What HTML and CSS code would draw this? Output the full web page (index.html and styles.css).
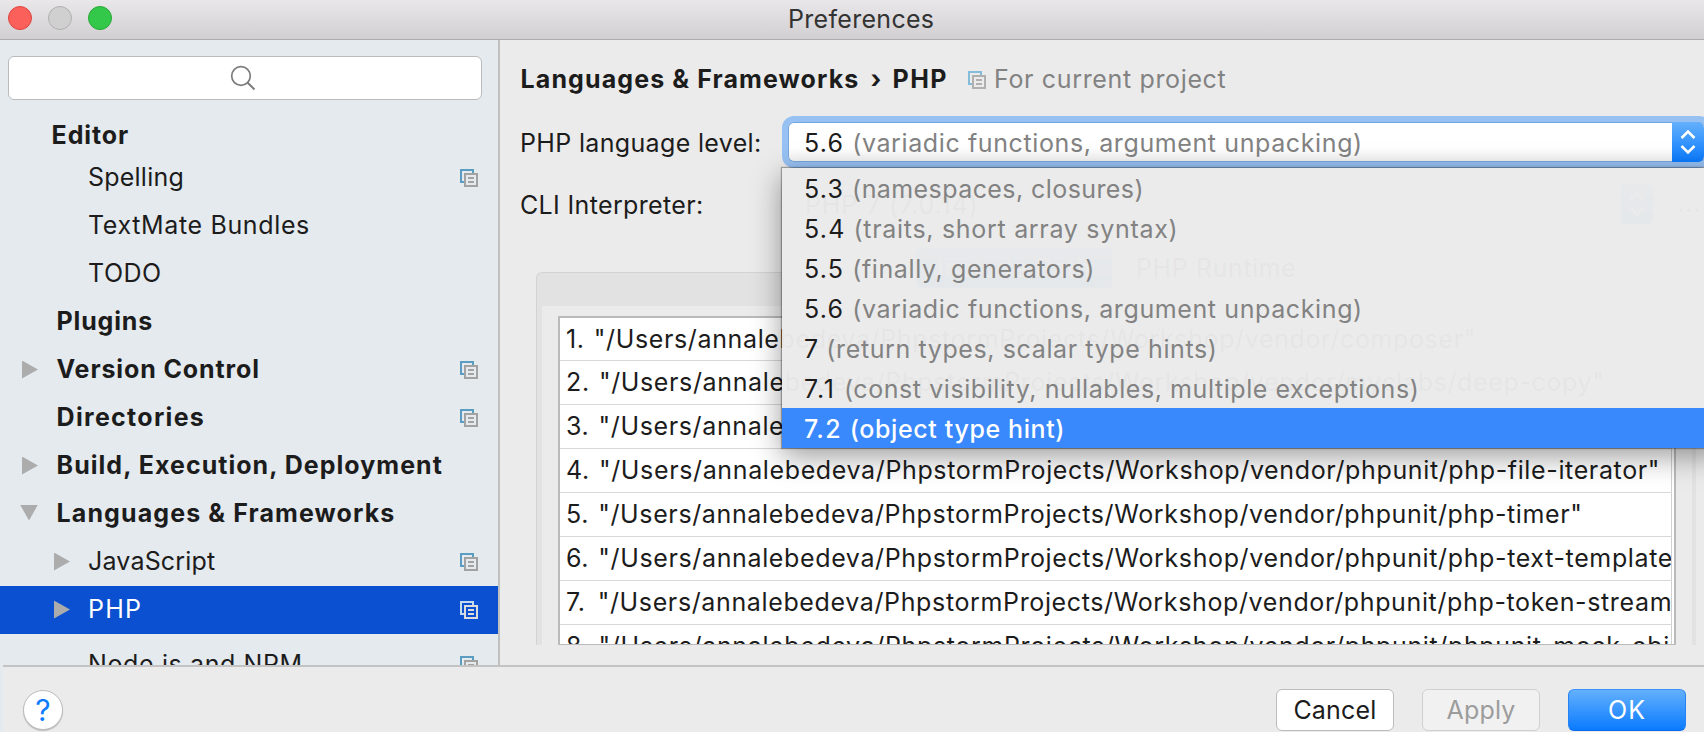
FILE: index.html
```html
<!DOCTYPE html>
<html lang="en">
<head>
<meta charset="utf-8">
<title>Preferences</title>
<link rel="stylesheet" href="styles.css">
</head>
<body>
<svg width="0" height="0" class="defs">
  <symbol id="copy" viewBox="0 0 18 18">
    <path class="back" d="M1 13V1H13V5" fill="none" stroke-width="2"/>
    <path class="back" d="M0 13H4" fill="none" stroke-width="2"/>
    <path class="front" d="M5 5H17V17H5ZM8 9H14M8 13H14" fill="none" stroke-width="2"/>
  </symbol>
  <symbol id="updown" viewBox="0 0 16 26">
    <path d="M1.5 9L8 2.5L14.5 9M1.5 17L8 23.5L14.5 17" fill="none" stroke="#fff" stroke-width="2.6"/>
  </symbol>
</svg>
<div class="window">
  <header class="titlebar">
    <span class="light close"></span><span class="light min"></span><span class="light max"></span>
    <span class="title">Preferences</span>
  </header>
  <div class="body">
    <aside class="sidebar">
      <div class="search">
        <svg width="26" height="26" viewBox="0 0 26 26"><circle cx="11" cy="11" r="9.3" fill="none" stroke="#7c7c7c" stroke-width="1.7"/><path d="M17.5 17.5L24.5 24.5" stroke="#7c7c7c" stroke-width="2"/></svg>
      </div>
      <ul class="tree">
        <li class="group editor"><span class="arrow"></span><span class="w-editor">Editor</span></li>
        <li class="sub"><span class="arrow"></span><span class="w-spelling">Spelling</span><svg class="copy"><use href="#copy"/></svg></li>
        <li class="sub"><span class="arrow"></span><span class="w-textmate">TextMate Bundles</span></li>
        <li class="sub"><span class="arrow"></span><span class="w-todo">TODO</span></li>
        <li class="group"><span class="arrow"></span><span class="w-plugins">Plugins</span></li>
        <li class="group"><span class="arrow right"></span><span class="w-vcs">Version Control</span><svg class="copy"><use href="#copy"/></svg></li>
        <li class="group"><span class="arrow"></span><span class="w-dirs">Directories</span><svg class="copy"><use href="#copy"/></svg></li>
        <li class="group"><span class="arrow right"></span><span class="w-build">Build, Execution, Deployment</span></li>
        <li class="group"><span class="arrow down"></span><span class="w-lang">Languages &amp; Frameworks</span></li>
        <li class="sub"><span class="arrow right"></span><span class="w-js">JavaScript</span><svg class="copy"><use href="#copy"/></svg></li>
        <li class="sub selected"><span class="arrow right"></span><span class="w-php">PHP</span><svg class="copy"><use href="#copy"/></svg></li>
        <li class="sub last"><span class="arrow"></span><span class="w-node">Node.js and NPM</span><svg class="copy"><use href="#copy"/></svg></li>
      </ul>
    </aside>
    <main class="content">
      <div class="crumbs">
        <span class="w-lang">Languages &amp; Frameworks</span><span class="sep">›</span><span class="w-phpb">PHP</span>
        <svg class="copy"><use href="#copy"/></svg><span class="scope">For current project</span>
      </div>
      <div class="field first">
        <label class="w-level">PHP language level:</label>
        <div class="combo focused">
          <span class="ver">5.6</span><span class="desc">(variadic functions, argument unpacking)</span>
          <span class="stepper"><svg width="16" height="26"><use href="#updown"/></svg></span>
          <ul class="menu">
            <li><span class="ver">5.3</span><span class="desc d53">(namespaces, closures)</span></li>
            <li><span class="ver">5.4</span><span class="desc d54">(traits, short array syntax)</span></li>
            <li><span class="ver">5.5</span><span class="desc">(finally, generators)</span></li>
            <li><span class="ver">5.6</span><span class="desc">(variadic functions, argument unpacking)</span></li>
            <li><span class="ver v7">7</span><span class="desc">(return types, scalar type hints)</span></li>
            <li><span class="ver v71">7.1</span><span class="desc d71">(const visibility, nullables, multiple exceptions)</span></li>
            <li class="active"><span class="ver">7.2</span><span class="desc">(object type hint)</span></li>
          </ul>
        </div>
      </div>
      <div class="field second">
        <label class="w-cli">CLI Interpreter:</label>
        <div class="combo plain"><span>PHP 7 (7.0.14)</span><span class="stepper"><svg width="16" height="26"><use href="#updown"/></svg></span></div>
        <div class="more">...</div>
      </div>
      <div class="tabs"><span class="tab on">Include Path</span><span class="tab">PHP Runtime</span></div>
      <section class="panel">
        <div class="inner">
          <ol class="paths">
            <li><span class="num">1.</span> "/Users/annalebedeva/PhpstormProjects/Workshop/vendor/composer"</li>
            <li><span class="num">2.</span> "/Users/annalebedeva/PhpstormProjects/Workshop/vendor/myclabs/deep-copy"</li>
            <li><span class="num">3.</span> "/Users/annalebedeva/PhpstormProjects/Workshop/vendor/phpspec/prophecy"</li>
            <li><span class="num">4.</span> "/Users/annalebedeva/PhpstormProjects/Workshop/vendor/phpunit/php-file-iterator"</li>
            <li><span class="num">5.</span> "/Users/annalebedeva/PhpstormProjects/Workshop/vendor/phpunit/php-timer"</li>
            <li><span class="num">6.</span> "/Users/annalebedeva/PhpstormProjects/Workshop/vendor/phpunit/php-text-template"</li>
            <li><span class="num seven">7.</span> "/Users/annalebedeva/PhpstormProjects/Workshop/vendor/phpunit/php-token-stream"</li>
            <li><span class="num">8.</span> "/Users/annalebedeva/PhpstormProjects/Workshop/vendor/phpunit/phpunit-mock-objects"</li>
          </ol>
        </div>
      </section>
    </main>
  </div>
  <footer class="footer">
    <button class="help">?</button>
    <button class="btn cancel">Cancel</button>
    <button class="btn apply">Apply</button>
    <button class="btn ok">OK</button>
  </footer>
</div>
</body>
</html>
```
FILE: styles.css
```css
* { box-sizing: border-box; }
body { margin: 0; font: 25px Inter, "Liberation Sans", sans-serif; color: #1c1c1c; }
ul, ol { list-style: none; margin: 0; padding: 0; }
.defs { position: absolute; }
.window { width: 1704px; height: 732px; overflow: hidden; display: flex; flex-direction: column; background: linear-gradient(90deg, #e5eaee 3px, #ebebeb 3px); white-space: nowrap; }

.titlebar { flex: none; height: 40px; display: flex; align-items: center; padding: 0 0 2px 8px; background: linear-gradient(#e9e7ea, #d1cfd1); border-bottom: 1px solid #adacad; }
.light { width: 24px; height: 24px; border-radius: 50%; margin: -1px 16px 0 0; border: 1px solid; }
.close { background: #fc605b; border-color: #e0443f; }
.min { background: #d0d0d0; border-color: #b0b0b0; }
.max { background: #34c84a; border-color: #25a934; }
.title { margin-left: 660px; letter-spacing: .3px; color: #333; line-height: 38px; }

.body { flex: none; height: 625px; display: flex; }
.sidebar { flex: none; width: 500px; padding-top: 16px; background: #e5eaee; border-right: 2px solid #c0c0c0; overflow: hidden; }
.search { width: 474px; height: 44px; margin: 0 0 12px 8px; border: 1px solid #b9bbbc; border-radius: 6px; background: #fff; display: flex; align-items: center; padding: 0 0 1px 221px; }
.tree li { height: 48px; display: flex; align-items: center; padding: 0 20px 2px 22px; line-height: 46px; }
.tree .group { font-weight: 700; }
.tree .sub { padding-left: 54px; }
.tree li.editor { height: 42px; padding: 4px 0 0 17px; line-height: 38px; }
.tree .last { margin-top: 7px; }
.tree .selected { background: #0a50d0; color: #fff; }
.arrow { flex: none; width: 34px; height: 18px; margin-top: 1px; }
.group .arrow { width: 34.6px; }
.arrow::before { content: ""; display: block; background: #acacac; }
.right::before { width: 16px; height: 18px; clip-path: polygon(0 0, 100% 50%, 0 100%); }
.down::before { width: 18px; height: 16px; margin-left: -2px; clip-path: polygon(0 0, 100% 0, 50% 100%); }
.copy { width: 18px; height: 18px; margin-left: auto; margin-top: 1px; --back: #5b9dc1; --front: #a2a2a2; }
.back { stroke: var(--back); }
.front { stroke: var(--front); }
.selected .copy { --back: #c3d9ee; --front: #dcdcdc; }

.w-editor { letter-spacing: .9px; }
.w-spelling { letter-spacing: .22px; }
.w-textmate { letter-spacing: .64px; }
.w-todo { letter-spacing: .5px; }
.w-plugins { letter-spacing: .82px; }
.w-vcs { letter-spacing: .88px; }
.w-dirs { letter-spacing: 1.3px; }
.w-build { letter-spacing: 1.03px; }
.w-lang { letter-spacing: 1.1px; }
.w-js { letter-spacing: .18px; }
.w-php { letter-spacing: 1.2px; }
.w-node { letter-spacing: .6px; }
.w-phpb { letter-spacing: 1.5px; }
.w-level { letter-spacing: .34px; }
.w-cli { letter-spacing: .35px; }

.content { flex: 1; min-width: 0; overflow: hidden; }
.crumbs { height: 76px; padding: 2px 0 0 20.6px; display: flex; align-items: center; font-weight: 700; line-height: 74px; }
.sep { width: 33px; padding-left: 11px; }
.crumbs .copy { margin: 1px 8px 0 20px; --back: #84bddc; --front: #b0b0b0; }
.scope { font-weight: 400; color: #828282; letter-spacing: .65px; }

.field { display: flex; align-items: center; padding-left: 20px; }
.field label { flex: none; width: 268px; padding-top: 2px; }
.first { height: 52px; }
.second { height: 40px; margin-top: 16px; }
.combo { display: flex; align-items: center; height: 40px; background: #fff; border: 1px solid #c4c4c4; border-radius: 6px; }
.focused { position: relative; flex: none; width: 917px; padding-left: 15px; border-color: #79a8dd; border-top-color: #6fa5e0; box-shadow: 0 0 0 6px #97c1f3; background: linear-gradient(#fff 65%, #f4f4f4); }
.ver { letter-spacing: 1.2px; margin-right: 8px; color: #1c1c1c; }
.v71 { letter-spacing: 1.9px; }
.v7 { margin-right: 7px; }
.desc { letter-spacing: .61px; color: #828282; }
.d53 { letter-spacing: .42px; }
.d54 { letter-spacing: .7px; }
.d71 { letter-spacing: .57px; }
.combo > span { padding-top: 1px; }
.combo > .stepper { width: 32px; height: 40px; padding: 0; margin: -1px 0 -1px auto; display: flex; align-items: center; justify-content: center; border-radius: 0 6px 6px 0; background: linear-gradient(#64b0fc, #0a7bff); }
.menu { position: absolute; z-index: 5; left: -7px; top: 45px; width: 940px; background: rgba(235, 235, 235, .975); box-shadow: 0 0 1px 1px rgba(0, 0, 0, .3), 0 8px 28px rgba(0, 0, 0, .4); }
.menu li { height: 40px; line-height: 40px; padding: 1px 0 0 22px; display: flex; align-items: center; }
.menu .active { background: #3485fc; background: rgba(52, 133, 252, .975); font-weight: 500; }
.active .ver, .active .desc { color: #fff; }
.plain { flex: none; width: 865px; margin-left: 1px; padding-left: 15px; letter-spacing: .9px; }
.more { flex: none; width: 60px; height: 40px; margin-left: 14px; padding-left: 8px; line-height: 36px; letter-spacing: 1px; border: 1px solid #c4c4c4; border-radius: 6px; background: #fff; }

.tabs { position: relative; display: flex; height: 40px; margin: 24px 0 -16px 416px; line-height: 40px; }
.tab { width: 205px; padding-left: 23px; letter-spacing: .6px; border: 1px solid #c4c4c4; line-height: 38px; background: #fff; border-radius: 0 6px 6px 0; }
.tab.on { width: 196px; padding-left: 20px; color: #fff; background: linear-gradient(#64b0fc, #0a7bff); border-color: #2784f5; border-radius: 6px 0 0 6px; }
.panel { width: 1160px; height: 373px; margin-left: 36px; padding: 33px 4px 0 5px; background: #e2e2e2; border: 1px solid #d3d3d3; border-width: 1px 0 0 1px; border-radius: 6px 0 0 0; }
.inner { height: 339px; padding: 10px 16px 0; background: #ebebeb; }
.paths { height: 329px; border: 2px solid #bababa; border-bottom-width: 1px; background: #fff; overflow: hidden; }
.paths li { width: 1112px; height: 44px; padding-left: 6px; line-height: 43px; letter-spacing: .633px; border-bottom: 1px solid #d8d8d8; border-right: 1px solid #d0d0d0; overflow: hidden; }
.paths li:first-child { height: 43px; line-height: 42px; }
.num { margin-right: 1.5px; }
.seven { margin-right: 4.5px; }

.footer { flex: none; height: 67px; margin-left: 3px; display: flex; align-items: flex-start; padding: 22px 18px 0 20px; border-top: 2px solid #c3c3c3; }
button { font: inherit; color: inherit; padding: 0; }
.help { width: 40px; height: 40px; margin: 1px auto 0 0; border: 1px solid #bdbdbd; border-radius: 50%; background: #fff; color: #0a7bff; font-size: 30px; line-height: 36px; box-shadow: 0 1px 1px rgba(0, 0, 0, .2); }
.btn { width: 118px; height: 42px; margin-left: 28px; border: 1px solid #bcbcbc; border-radius: 6px; background: #fff; letter-spacing: .2px; line-height: 40px; }
.apply { color: #9c9c9c; background: #f1f1f1; border-color: #d0d0d0; }
.ok { color: #fff; background: linear-gradient(#64b0fc, #0a7bff); border-color: #3b93f7 #2583f5 #0a6cf0; letter-spacing: 1px; }
```
